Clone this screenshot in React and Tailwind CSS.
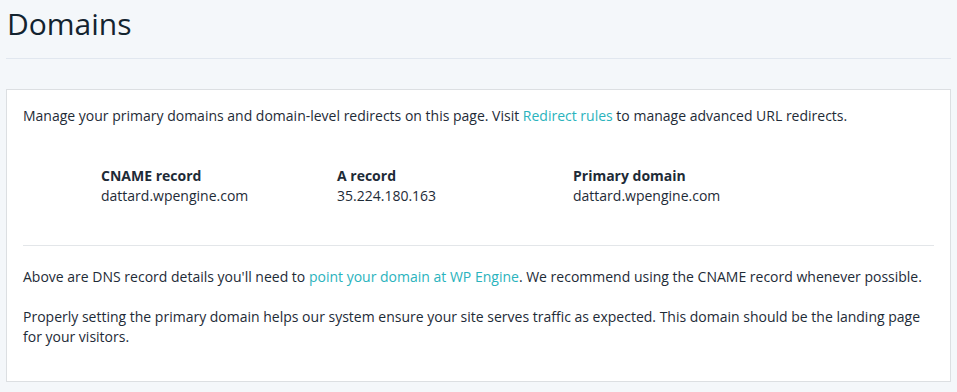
export default function App() {
  return (
    <div className="min-h-[392px] bg-[#f4f7fa] px-[6px] text-[#1e2b37] font-['Open_Sans',sans-serif]">
      <h1 className="pt-[4px] pl-[1px] text-[30px] leading-[40px] font-normal text-[#13232f]">
        Domains
      </h1>

      <div className="mt-[14px] h-px bg-[#e1e7ef] w-[945px]" />

      <div className="mt-[30px] w-[945px] bg-white border border-[#dcdfe2] px-[16px] pt-[16px] pb-[14px] text-[14px] leading-[20px]">
        <p>
          Manage your primary domains and domain-level redirects on this page. Visit{" "}
          <a className="text-[#2ab3bd]">Redirect rules</a> to manage advanced URL redirects.
        </p>

        <div className="mt-[40px] ml-[78px] grid grid-cols-[236px_236px_1fr]">
          <div>
            <div className="font-bold">CNAME record</div>
            <div>dattard.wpengine.com</div>
          </div>
          <div>
            <div className="font-bold">A record</div>
            <div>35.224.180.163</div>
          </div>
          <div>
            <div className="font-bold">Primary domain</div>
            <div>dattard.wpengine.com</div>
          </div>
        </div>

        <div className="mt-[39px] h-px bg-[#e3e6e9]" />

        <p className="mt-[21px]">
          Above are DNS record details you'll need to{" "}
          <a className="text-[#2ab3bd]">point your domain at WP Engine</a>. We recommend using the CNAME record whenever possible.
        </p>

        <p className="mt-[20px] mb-[20px] pr-[10px]">
          Properly setting the primary domain helps our system ensure your site serves traffic as expected. This domain should be the landing page for your visitors.
        </p>
      </div>
    </div>
  );
}
